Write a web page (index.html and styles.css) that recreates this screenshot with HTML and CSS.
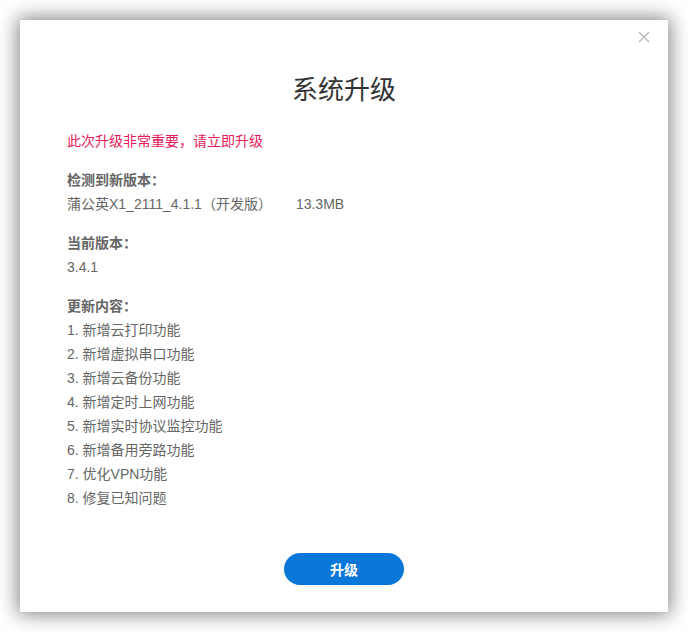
FILE: index.html
```html
<!DOCTYPE html>
<html lang="zh-CN">
<head>
<meta charset="utf-8">
<title>系统升级</title>
<link rel="stylesheet" href="styles.css">
</head>
<body>
<div class="dialog">
  <button class="close" aria-label="关闭">
    <svg width="12" height="12" viewBox="0 0 12 12"><path d="M1 1L11 11M11 1L1 11" stroke="#b5b5b5" stroke-width="1.2" fill="none"/></svg>
  </button>
  <h1 class="title">系统升级</h1>
  <p class="warn">此次升级非常重要，请立即升级</p>
  <div class="group">
    <div class="label">检测到新版本：</div>
    <div class="value"><span class="ver">蒲公英X1_2111_4.1.1（开发版）</span><span class="size">13.3MB</span></div>
  </div>
  <div class="group">
    <div class="label">当前版本：</div>
    <div class="value">3.4.1</div>
  </div>
  <div class="group">
    <div class="label">更新内容：</div>
    <div class="value">1. 新增云打印功能</div>
    <div class="value">2. 新增虚拟串口功能</div>
    <div class="value">3. 新增云备份功能</div>
    <div class="value">4. 新增定时上网功能</div>
    <div class="value">5. 新增实时协议监控功能</div>
    <div class="value">6. 新增备用旁路功能</div>
    <div class="value">7. 优化VPN功能</div>
    <div class="value">8. 修复已知问题</div>
  </div>
  <div class="actions">
    <button class="btn">升级</button>
  </div>
</div>
</body>
</html>
```
FILE: styles.css
```css
html, body {
  margin: 0;
  padding: 0;
  background: #ffffff;
}
body {
  padding: 20px;
  font-family: "Liberation Sans", "Noto Sans CJK SC", sans-serif;
}
.dialog {
  position: relative;
  box-sizing: border-box;
  width: 648px;
  height: 592px;
  background: #fff;
  box-shadow: 0 0 18px 2px rgba(0, 0, 0, 0.5);
  padding: 50px 47px 27px;
  display: flex;
  flex-direction: column;
}
.close {
  position: absolute;
  top: 10px;
  right: 17px;
  width: 14px;
  height: 14px;
  padding: 0;
  border: 0;
  background: none;
  display: flex;
  align-items: center;
  justify-content: center;
}
.title {
  margin: 0;
  text-align: center;
  font-size: 26px;
  line-height: 36px;
  font-weight: normal;
  color: #333;
  font-family: "Noto Sans CJK SC", sans-serif;
}
.warn {
  margin: 23px 0 0;
  font-size: 14px;
  line-height: 24px;
  color: #e8195c;
}
.group {
  margin-top: 15px;
}
.label {
  font-size: 14px;
  line-height: 24px;
  font-weight: bold;
  color: #666;
}
.value {
  font-size: 14px;
  line-height: 24px;
  color: #666;
}
.ver {
  margin-right: 24px;
}
.actions {
  margin-top: auto;
  display: flex;
  justify-content: center;
}
.btn {
  width: 120px;
  height: 32px;
  border: 0;
  border-radius: 16px;
  background: #0877d8;
  color: #fff;
  font-family: "Noto Sans CJK SC", sans-serif;
  font-size: 14px;
  font-weight: bold;
  padding: 0;
}
```
